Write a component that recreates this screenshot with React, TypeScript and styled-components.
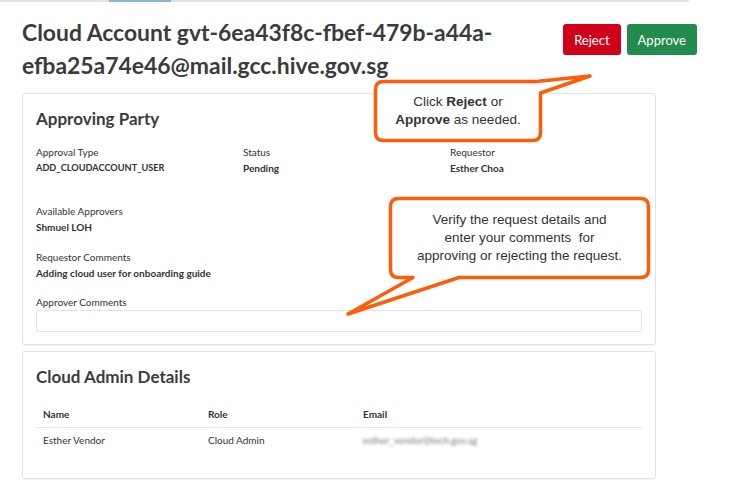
import React from 'react';
import styled, { createGlobalStyle } from 'styled-components';

const Global = createGlobalStyle`
  html, body { margin: 0; padding: 0; background: #fff; }
  body { font-family: Lato, "Noto Sans", sans-serif; color: #333; }
  * { box-sizing: border-box; }
`;

const Page = styled.div`
  position: relative;
  width: 732px;
  height: 495px;
  overflow: hidden;
`;

const TabStrip = styled.div`
  display: flex;
  width: 689px;
  height: 2px;
  padding-left: 109px;
  background: #e4e4e4;
`;

const TabActive = styled.div`
  width: 62px;
  height: 2px;
  background: #8ab8cc;
`;

const Content = styled.main`
  padding: 0 22px;
`;

const Header = styled.header`
  display: flex;
  justify-content: space-between;
  align-items: flex-start;
  width: 675px;
  padding-top: 14px;
`;

const Title = styled.h1`
  margin: 0;
  width: 530px;
  font-size: 22.9px;
  line-height: 33px;
  font-weight: 700;
  color: #3b3b3b;
`;

const Actions = styled.div`
  display: flex;
  gap: 6px;
  margin-top: 8px;
`;

const Button = styled.button<{ $variant: 'danger' | 'success' }>`
  height: 31px;
  padding: 0 11px;
  border: none;
  border-radius: 3px;
  color: #fff;
  font-family: Lato, "Noto Sans", sans-serif;
  font-size: 13px;
  background: ${p => (p.$variant === 'danger' ? '#d0021b' : '#218c4c')};
`;

const Card = styled.section<{ $gap?: number }>`
  width: 634px;
  margin-top: ${p => p.$gap ?? 0}px;
  padding: 13px 13px 12px;
  border: 1px solid #e2e2e2;
  border-radius: 3px;
  box-shadow: 0 1px 2px rgba(0, 0, 0, 0.06);
`;

const CardTitle = styled.h2`
  margin: 0;
  font-size: 17px;
  line-height: 24px;
  font-weight: 700;
  color: #3b3b3b;
`;

const FieldGrid = styled.div<{ $top?: number; $bottom: number }>`
  display: grid;
  grid-template-columns: 207px 207px 1fr;
  margin-top: ${p => p.$top ?? 0}px;
  margin-bottom: ${p => p.$bottom}px;
`;

const Field = styled.div`
  display: flex;
  flex-direction: column;
`;

const Label = styled.span`
  font-size: 10px;
  line-height: 16px;
  color: #333;
`;

const Value = styled.span<{ $caps?: boolean }>`
  font-size: ${p => (p.$caps ? 9.2 : 10)}px;
  line-height: 16px;
  font-weight: 700;
  color: #333;
`;

const CommentInput = styled.div`
  height: 22px;
  border: 1px solid #e3e3e3;
  border-radius: 2px;
`;

const Table = styled.table`
  width: 100%;
  margin: 12px 0 13px;
  border-collapse: collapse;
  font-size: 10px;
  color: #333;
`;

const Th = styled.th<{ $w?: number }>`
  width: ${p => (p.$w ? `${p.$w}px` : 'auto')};
  height: 26px;
  padding: 0 7px;
  text-align: left;
  font-weight: 700;
  border-bottom: 1px solid #e6e6e6;
`;

const Td = styled.td`
  height: 26px;
  padding: 0 7px;
`;

const Blurred = styled.span`
  color: #777;
  font-size: 9.5px;
  filter: blur(1.4px);
`;

const CalloutBox = styled.div<{ $x: number; $y: number; $w: number; $h: number }>`
  position: absolute;
  left: ${p => p.$x}px;
  top: ${p => p.$y}px;
  width: ${p => p.$w}px;
  height: ${p => p.$h}px;
  display: flex;
  align-items: center;
  justify-content: center;
  text-align: center;
  font-family: "Liberation Sans", Arial, sans-serif;
  font-size: 13.5px;
  line-height: 18px;
  color: #333;
`;

const CalloutShape = styled.svg`
  position: absolute;
  left: 0;
  top: 0;
  width: 100%;
  height: 100%;
  overflow: visible;
`;

const CalloutText = styled.p`
  position: relative;
  margin: 0;
  white-space: pre;
`;

type CalloutProps = { x: number; y: number; w: number; h: number; d: string; children: React.ReactNode };

const Callout = ({ x, y, w, h, d, children }: CalloutProps) => (
  <CalloutBox $x={x} $y={y} $w={w} $h={h}>
    <CalloutShape viewBox={`0 0 ${w} ${h}`}>
      <path d={d} fill="#fff" stroke="#ff5c0a" strokeWidth={3.5} strokeLinejoin="round" />
    </CalloutShape>
    <CalloutText>{children}</CalloutText>
  </CalloutBox>
);

const path1 =
  'M 9.5 1.5 L 162 1.5 L 216 -4 L 166.5 13 L 166.5 52.5 Q 166.5 60.5 158.5 60.5 L 9.5 60.5 Q 1.5 60.5 1.5 52.5 L 1.5 9.5 Q 1.5 1.5 9.5 1.5 Z';
const path2 =
  'M 9.5 1.5 H 251.5 Q 259.5 1.5 259.5 9.5 V 72.5 Q 259.5 80.5 251.5 80.5 H 70 L -41 117 L 24 80.5 H 9.5 Q 1.5 80.5 1.5 72.5 V 9.5 Q 1.5 1.5 9.5 1.5 Z';

export default function App() {
  return (
    <Page>
      <Global />
      <TabStrip>
        <TabActive />
      </TabStrip>
      <Content>
        <Header>
          <Title>Cloud Account gvt-6ea43f8c-fbef-479b-a44a-efba25a74e46@mail.gcc.hive.gov.sg</Title>
          <Actions>
            <Button $variant="danger">Reject</Button>
            <Button $variant="success">Approve</Button>
          </Actions>
        </Header>

        <Card $gap={11}>
          <CardTitle>Approving Party</CardTitle>
          <FieldGrid $top={13} $bottom={27}>
            <Field>
              <Label>Approval Type</Label>
              <Value $caps>ADD_CLOUDACCOUNT_USER</Value>
            </Field>
            <Field>
              <Label>Status</Label>
              <Value>Pending</Value>
            </Field>
            <Field>
              <Label>Requestor</Label>
              <Value>Esther Choa</Value>
            </Field>
          </FieldGrid>
          <FieldGrid $bottom={14}>
            <Field>
              <Label>Available Approvers</Label>
              <Value>Shmuel LOH</Value>
            </Field>
          </FieldGrid>
          <FieldGrid $bottom={13}>
            <Field>
              <Label>Requestor Comments</Label>
              <Value>Adding cloud user for onboarding guide</Value>
            </Field>
          </FieldGrid>
          <Field>
            <Label>Approver Comments</Label>
            <CommentInput />
          </Field>
        </Card>

        <Card $gap={6}>
          <CardTitle>Cloud Admin Details</CardTitle>
          <Table>
            <thead>
              <tr>
                <Th $w={165}>Name</Th>
                <Th $w={155}>Role</Th>
                <Th>Email</Th>
              </tr>
            </thead>
            <tbody>
              <tr>
                <Td>Esther Vendor</Td>
                <Td>Cloud Admin</Td>
                <Td>
                  <Blurred>esther_vendor@tech.gov.sg</Blurred>
                </Td>
              </tr>
            </tbody>
          </Table>
        </Card>
      </Content>

      <Callout x={374} y={80} w={168} h={62} d={path1}>
        Click <b>Reject</b> or{'\n'}
        <b>Approve</b> as needed.
      </Callout>
      <Callout x={389} y={197} w={261} h={82} d={path2}>
        {'Verify the request details and\nenter your comments  for\napproving or rejecting the request.'}
      </Callout>
    </Page>
  );
}
